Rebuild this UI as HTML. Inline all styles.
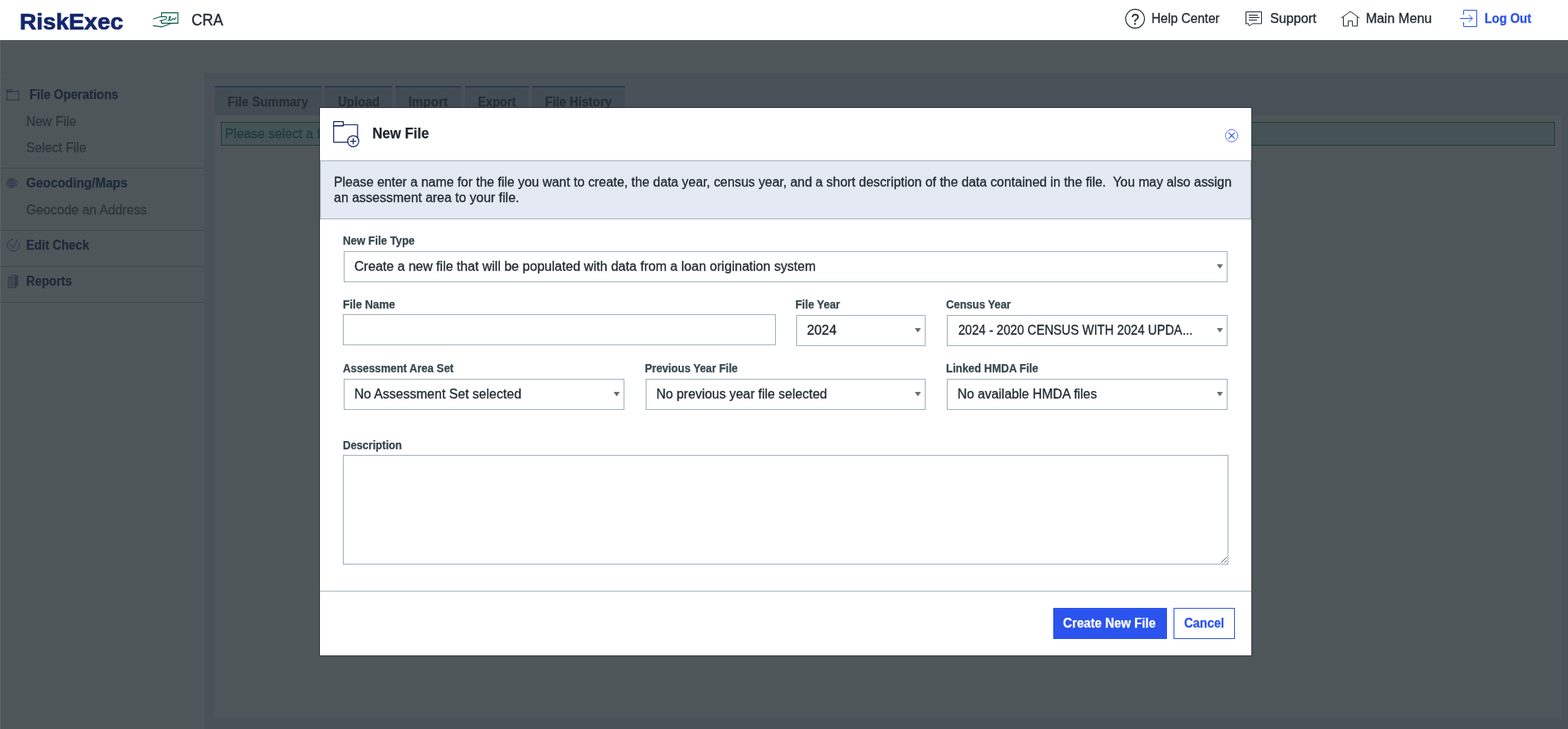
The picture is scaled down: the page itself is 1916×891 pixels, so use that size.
<!DOCTYPE html>
<html lang="en">
<head>
<meta charset="utf-8">
<title>RiskExec - CRA - New File</title>
<style>
*{box-sizing:border-box;margin:0;padding:0}
html,body{width:1916px;height:891px;overflow:hidden;background:#4a5158;font-family:"Liberation Sans",sans-serif;}
.abs,.t,header,aside,main,section,nav,footer,.box{position:absolute}
.tl{position:absolute;left:0;top:0;width:100%;height:100%;will-change:transform}
.t{white-space:pre;line-height:1;display:block;transform-origin:0 50%;font-size:16px;color:#1d272c;-webkit-text-stroke:0.3px}
.b{font-weight:700;-webkit-text-stroke:0.25px}
header{left:0;top:0;width:1916px;height:49px;background:#fff;z-index:5}
#band{left:0;top:49px;width:1916px;height:40px;background:#4e5659}
aside{left:0;top:89px;width:250px;height:802px;background:#4e5659}
aside:before{content:"";position:absolute;left:0;top:-40px;width:1px;height:842px;background:#596164}
aside:after{content:"";position:absolute;left:0;top:0;width:250px;height:1px;background:#4a5158}
aside hr{position:absolute;left:1px;width:249px;height:1px;border:0;background:#3e4951}
main{left:250px;top:89px;width:1666px;height:802px;background:#4a5158}
.tab{position:absolute;top:16px;height:36px;background:#434c55;border-top:2px solid #2f3a4f}
#panel{left:12px;top:52px;width:1646px;height:736px;background:#4e5659}
#msg{left:20px;top:60px;width:1630px;height:29px;border:1px solid #1d3a36;background:#465356}
#modal{left:391px;top:132px;width:1138px;height:669px;background:#fff;z-index:10;box-shadow:0 0 0 1px rgba(20,28,32,.32),0 0 2px rgba(0,0,0,.25)}
#info{left:0;top:64px;width:1138px;height:72px;background:#e5e9f4;border:1px solid #a3b2bb}
.inp{position:absolute;height:38px;background:#fff;border:1px solid #9fb0bb}
.sel:after{content:"";position:absolute;right:4.6px;top:15px;width:7.6px;height:5.4px;background:#6f6f6f;clip-path:polygon(0 0,100% 0,50% 100%)}
#foot{left:0;top:590px;width:1138px;height:1px;background:#a9b6bd}
.btn{position:absolute;top:611px;height:38px;border:1px solid #2b54ee}
.btn.pri{background:#2b54ee}
.btn.sec{background:#fff}
svg{position:absolute;overflow:visible}
</style>
</head>
<body>
<header>
<div class="tl">
<span class="t b" style="left:23.87px;top:12.5px;font-size:28px;color:#14266b;transform:scaleX(1.0161);-webkit-text-stroke:0.7px;">RiskExec</span>
<span class="t" style="left:234.03px;top:14px;font-size:20px;transform:scaleX(0.9148);">CRA</span>
<span class="t" style="left:1407.06px;top:15px;transform:scaleX(0.9756);">Help Center</span>
<span class="t" style="left:1551.66px;top:15px;transform:scaleX(1.0096);">Support</span>
<span class="t" style="left:1669.47px;top:15px;transform:scaleX(1.0177);">Main Menu</span>
<span class="t b" style="left:1813.98px;top:15px;color:#2b54ee;transform:scaleX(0.9326);">Log Out</span>
</div>
<svg width="1916" height="49" viewBox="0 0 1916 49" style="left:0;top:0" fill="none" stroke-linecap="round" stroke-linejoin="round">
<g stroke="#065f46" stroke-width="1.1">
<path d="M197.4 20.3V15.6H217.4V28.4H197.4V25.3"/>
<path d="M187.3 23.2L194 21Q196 20.4 197.4 20.4H203Q203.9 20.7 203.5 21.8L202.6 23.4L197.6 25L195.6 25.6"/>
<path d="M187.3 31.4L197.4 32.9Q198.4 32.9 200 32.1L208.6 28.7"/>
<path d="M205.2 25.3Q206 24.4 206.9 24.3Q208.7 22 208.3 20.3Q207.6 19.5 206.9 20.8Q206.5 22.6 207.5 24.5Q208.5 25.4 209.5 24.7L211.5 22.6Q212.3 23.8 213.4 23.6Q214.4 23.2 215 21.5"/>
</g>
<g stroke="#1d272c" stroke-width="1">
<circle cx="1387" cy="22.9" r="11.45" stroke-width="1.15"/>
<path d="M1522.5 28.9V14.5H1541.5V28.9H1530.7L1526.4 31.7L1525.4 28.9Z" stroke-linejoin="miter"/>
<path d="M1526.4 18.5H1536.6M1526.4 21.5H1538.6M1526.4 24.5H1535.7"/>
<path d="M1639.2 21.9L1650.1 14L1660.9 21.9" stroke-linejoin="miter"/>
<path d="M1641.5 20.6V31.9H1647.4V25.7H1652.6V31.9H1658.5V20.6" stroke-linejoin="miter"/>
</g>
<g stroke="#2b54ee" stroke-width="1" stroke-linejoin="miter">
<path d="M1788.5 17.6V12.5H1804.5V32.5H1788.5V27.4"/>
<path d="M1784.3 22.5H1799M1795.2 18.5L1799.1 22.5L1795.2 26.5"/>
</g>
<text x="1387.2" y="29.7" text-anchor="middle" font-family="Liberation Sans, sans-serif" font-size="17.5" fill="#1d272c" stroke="#1d272c" stroke-width="0.35">?</text>
</svg>
</header>
<div id="band" class="abs"></div>
<aside>
<nav>
<div class="tl">
<span class="t b" style="left:35.98px;top:19px;color:#1f293a;transform:scaleX(0.9323);">File Operations</span>
<span class="t" style="left:32.21px;top:52px;color:#2a363b;transform:scaleX(0.9826);">New File</span>
<span class="t" style="left:31.71px;top:84px;color:#2a363b;transform:scaleX(0.9849);">Select File</span>
<span class="t b" style="left:31.60px;top:127px;color:#1f293a;transform:scaleX(0.9603);">Geocoding/Maps</span>
<span class="t" style="left:31.64px;top:160px;color:#2a363b;transform:scaleX(0.9865);">Geocode an Address</span>
<span class="t b" style="left:32.30px;top:203px;color:#1f293a;transform:scaleX(0.9304);">Edit Check</span>
<span class="t b" style="left:31.69px;top:247px;color:#1f293a;transform:scaleX(0.9271);">Reports</span>
</div>
</nav>
<hr style="top:116px"><hr style="top:192px"><hr style="top:236px"><hr style="top:280px">
<svg width="250" height="802" viewBox="0 89 250 802" style="left:0;top:0" fill="none" stroke="#2b3647" stroke-width="1" stroke-linejoin="round">
<path d="M8.6 112.2V109.6H14.5V112.2M8.6 111.8H23V122.3H8.6Z"/>
<path d="M8.6 112.2H14.5" stroke-width="1.3"/>
<g stroke-width="0.8">
<circle cx="13.8" cy="223.8" r="5.6"/>
<ellipse cx="13.8" cy="223.8" rx="2.6" ry="5.6"/>
<path d="M13.8 218.2V229.4M8.2 223.8H19.4M9 221H18.6M9 226.6H18.6"/>
<path d="M19.9 220.1L22.1 221.2L19.9 222.3ZM19.9 225.3L22.1 226.4L19.9 227.5Z" fill="#2b3647" stroke="none"/>
<circle cx="22.5" cy="223.8" r="0.8" fill="#2b3647" stroke="none"/>
</g>
<path d="M23.4 297.6A7.3 7.3 0 1 1 15.6 292.3" stroke-linecap="round"/>
<path d="M12 298L15.9 303.4L21.9 292.4" stroke-linecap="round"/>
<path d="M10.3 339.3H18.4V351.6H10.3Z"/>
<path d="M10.3 339.3L13.3 336.9H21.5L18.4 339.3M21.5 336.9V348.8L18.4 351.6" />
<path d="M18.9 339.5L21.2 337.6V348.6L18.9 350.8Z" fill="#303b50" stroke="none"/>
<path d="M12.2 341.5H16.9M12.2 343.5H16.9M12.2 345.5H16.9M12.2 347.5H16.9M12.2 349.5H16.9"/>
</svg>
</aside>
<main>
<div class="tab" role="tab" style="left:12px;width:131px"></div>
<div class="tab" style="left:147px;width:82px"></div>
<div class="tab" style="left:233px;width:81px"></div>
<div class="tab" style="left:318px;width:78px"></div>
<div class="tab" style="left:400px;width:114px"></div>
<section id="panel"></section>
<div id="msg" class="abs"></div>
<div class="tl">
<span class="t b" style="left:28.21px;top:28px;color:#252f34;transform:scaleX(0.9395);">File Summary</span>
<span class="t b" style="left:163.33px;top:28px;color:#252f34;transform:scaleX(0.94);">Upload</span>
<span class="t b" style="left:249.04px;top:28px;color:#252f34;transform:scaleX(0.9687);">Import</span>
<span class="t b" style="left:333.55px;top:28px;color:#252f34;transform:scaleX(0.9134);">Export</span>
<span class="t b" style="left:416.46px;top:28px;color:#252f34;transform:scaleX(0.9362);">File History</span>
<span class="t" style="left:24.74px;top:67px;color:#1e3d39;transform:scaleX(0.9933);">Please select a file.</span>
</div>
</main>
<section id="modal" role="dialog" aria-label="New File">
<div id="info" class="abs"></div>
<div class="inp sel" role="combobox" aria-label="New File Type" style="left:29px;top:175px;width:1080px"></div>
<div class="inp" role="textbox" aria-label="File Name" style="left:28px;top:252px;width:529px"></div>
<div class="inp sel" role="combobox" aria-label="File Year" style="left:582px;top:253px;width:158px"></div>
<div class="inp sel" role="combobox" aria-label="Census Year" style="left:766px;top:253px;width:343px"></div>
<div class="inp sel" role="combobox" aria-label="Assessment Area Set" style="left:29px;top:331px;width:343px"></div>
<div class="inp sel" role="combobox" aria-label="Previous Year File" style="left:398px;top:331px;width:342px"></div>
<div class="inp sel" role="combobox" aria-label="Linked HMDA File" style="left:766px;top:331px;width:343px"></div>
<div class="inp" role="textbox" aria-multiline="true" aria-label="Description" style="left:28px;top:424px;width:1082px;height:134px">
<svg width="10" height="10" viewBox="0 0 10 10" style="right:0;bottom:0"><path d="M2.1 8.8L8.9 2M6.1 8.8L8.9 6" stroke="#5a5a5a" stroke-width="1" fill="none"/></svg>
</div>
<div id="foot" class="abs"></div>
<div class="btn pri" role="button" aria-label="Create New File" style="left:896px;width:139px"></div>
<div class="btn sec" role="button" aria-label="Cancel" style="left:1043px;width:75px"></div>
<div class="tl">
<span class="t b" style="left:63.51px;top:22px;font-size:18px;transform:scaleX(0.9466);">New File</span>
<span class="t" style="left:17.33px;top:83px;transform:scaleX(0.9922);">Please enter a name for the file you want to create, the data year, census year, and a short description of the data contained in the file.  You may also assign</span>
<span class="t" style="left:17.18px;top:102px;transform:scaleX(0.9986);">an assessment area to your file.</span>
<span class="t b" style="left:27.50px;top:155px;font-size:14px;color:#37474f;transform:scaleX(0.9506);">New File Type</span>
<span class="t b" style="left:27.78px;top:233px;font-size:14px;color:#37474f;transform:scaleX(0.9661);">File Name</span>
<span class="t b" style="left:580.76px;top:233px;font-size:14px;color:#37474f;transform:scaleX(0.9497);">File Year</span>
<span class="t b" style="left:765.03px;top:233px;font-size:14px;color:#37474f;transform:scaleX(0.9453);">Census Year</span>
<span class="t b" style="left:27.99px;top:311px;font-size:14px;color:#37474f;transform:scaleX(0.9475);">Assessment Area Set</span>
<span class="t b" style="left:396.61px;top:311px;font-size:14px;color:#37474f;transform:scaleX(0.9421);">Previous Year File</span>
<span class="t b" style="left:764.76px;top:311px;font-size:14px;color:#37474f;transform:scaleX(0.9511);">Linked HMDA File</span>
<span class="t b" style="left:27.54px;top:405px;font-size:14px;color:#37474f;transform:scaleX(0.9362);">Description</span>
<span class="t" style="left:41.90px;top:186px;transform:scaleX(1.0048);">Create a new file that will be populated with data from a loan origination system</span>
<span class="t" style="left:595.27px;top:264px;transform:scaleX(1.0165);">2024</span>
<span class="t" style="left:779.57px;top:264px;transform:scaleX(0.9409);">2024 - 2020 CENSUS WITH 2024 UPDA</span>
<span class="t" style="left:1053.59px;top:264px;transform:scaleX(0.9251);">...</span>
<span class="t" style="left:42.25px;top:342px;transform:scaleX(1.0019);">No Assessment Set selected</span>
<span class="t" style="left:411.38px;top:342px;transform:scaleX(0.9938);">No previous year file selected</span>
<span class="t" style="left:779.49px;top:342px;transform:scaleX(0.9927);">No available HMDA files</span>
<span class="t b" style="left:908.35px;top:622px;color:#ffffff;transform:scaleX(0.9495);">Create New File</span>
<span class="t b" style="left:1055.79px;top:622px;color:#2b54ee;transform:scaleX(0.9332);">Cancel</span>
</div>
<svg width="1138" height="669" viewBox="391 132 1138 669" style="left:0;top:0" fill="none" stroke-linecap="round" stroke-linejoin="round">
<g stroke="#0f2167" stroke-width="1.2">
<path d="M407.7 148.7H419.4V153.6M407.7 148.7V173.8H424.9M419.4 152.5H436.9V168.2"/>
<path d="M407.7 153.8H419.4" stroke-width="1.5"/>
<circle cx="431.6" cy="172.6" r="6.8"/>
<path d="M428.3 172.6H434.9M431.6 169.3V175.9"/>
</g>
<circle cx="1505" cy="165.8" r="7.55" stroke="#4a6cf1" stroke-width="0.9"/>
<path d="M1501.6 162.4L1508.4 169.2M1508.4 162.4L1501.6 169.2" stroke="#2b54ee" stroke-width="1.1"/>
</svg>
</section>
</body>
</html>
